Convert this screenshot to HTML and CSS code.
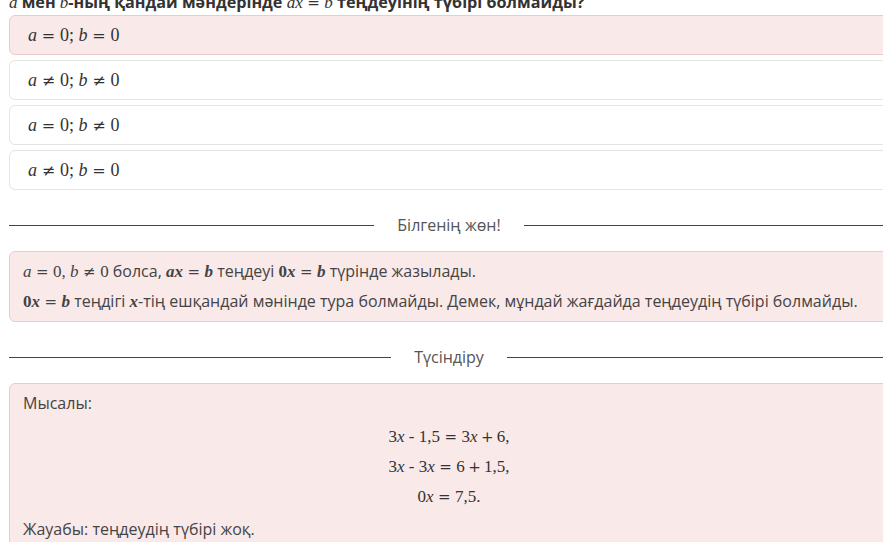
FILE: index.html
```html
<!DOCTYPE html>
<html lang="kk">
<head>
    <meta charset="UTF-8">
    <meta name="viewport" content="width=device-width, initial-scale=1.0">
    <title>Теңдеудің түбірі</title>
    <link rel="stylesheet" href="styles.css">
</head>
<body>
    <div class="page">
        <h2 class="question"><span class="m"><i>a</i></span> мен <span class="m"><i>b</i></span>-ның қандай мәндерінде <span class="m"><i>ax</i><span class="rel">=</span><i>b</i></span> теңдеуінің түбірі болмайды?</h2>

        <div class="options">
            <div class="option selected"><span class="m"><i>a</i><span class="rel">=</span>0; <i>b</i><span class="rel">=</span>0</span></div>
            <div class="option"><span class="m"><i>a</i><span class="rel">≠</span>0; <i>b</i><span class="rel">≠</span>0</span></div>
            <div class="option"><span class="m"><i>a</i><span class="rel">=</span>0; <i>b</i><span class="rel">≠</span>0</span></div>
            <div class="option"><span class="m"><i>a</i><span class="rel">≠</span>0; <i>b</i><span class="rel">=</span>0</span></div>
        </div>

        <div class="divider"><span>Білгенің жөн!</span></div>

        <div class="note">
            <p><span class="m"><i>a</i><span class="rel">=</span>0, <i>b</i><span class="rel">≠</span>0</span> болса, <span class="m bold"><i>ax</i><span class="rel">=</span><i>b</i></span> теңдеуі <span class="m bold">0<i>x</i><span class="rel">=</span><i>b</i></span> түрінде жазылады.</p>
            <p><span class="m bold">0<i>x</i><span class="rel">=</span><i>b</i></span> теңдігі <span class="m bold"><i>x</i></span>-тің ешқандай мәнінде тура болмайды. Демек, мұндай жағдайда теңдеудің түбірі болмайды.</p>
        </div>

        <div class="divider"><span>Түсіндіру</span></div>

        <div class="note example">
            <p>Мысалы:</p>
            <div class="equations">
                <div class="m">3<i>x</i> - 1,5<span class="rel">=</span>3<i>x</i><span class="bin">+</span>6,</div>
                <div class="m">3<i>x</i> - 3<i>x</i><span class="rel">=</span>6<span class="bin">+</span>1,5,</div>
                <div class="m">0<i>x</i><span class="rel">=</span>7,5.</div>
            </div>
            <p>Жауабы: теңдеудің түбірі жоқ.</p>
        </div>
    </div>
</body>
</html>
```

FILE: styles.css
```css
body {
    margin: 0;
    font-family: 'Open Sans', sans-serif;
    color: #444;
    background: #fff;
    overflow: hidden;
}
.page {
    width: 880px;
    margin: -8px 0 0 9px;
}
.m {
    font-family: 'Liberation Serif', serif;
    font-size: 17px;
    white-space: nowrap;
}
.m i {
    font-style: italic;
}
.m .rel {
    font-family: 'DejaVu Serif', serif;
    font-weight: 400;
    font-size: 15px;
    padding: 0 0.3em;
}
.m .bin {
    font-family: 'DejaVu Serif', serif;
    font-size: 15px;
    padding: 0 0.22em;
}
.m.bold {
    font-weight: 700;
}
.question {
    margin: 0 0 2px 0;
    font-size: 16.2px;
    line-height: 20px;
    font-weight: 700;
    color: #333;
}
.question .m {
    font-weight: 400;
}
.options {
    display: flex;
    flex-direction: column;
    gap: 5px;
}
.option {
    height: 38px;
    display: flex;
    align-items: center;
    padding: 0 18px;
    border: 1px solid #e4e4e4;
    border-radius: 6px;
    color: #333;
}
.option .m {
    font-size: 18px;
}
.option .m .rel {
    font-size: 16px;
}
.option.selected {
    background-color: #f9e9e9;
    border-color: #efcaca;
}
.divider {
    display: flex;
    align-items: center;
    gap: 23px;
    margin: 24px 0 15px;
    font-size: 16px;
    line-height: 22px;
    color: #555;
}
.divider::before,
.divider::after {
    content: "";
    flex: 1;
    height: 1px;
    background-color: #444;
}
.note {
    background-color: #f9e9e9;
    border: 1px solid #efcaca;
    border-radius: 6px;
    padding: 5px 13px 4px;
    font-size: 16px;
    line-height: 29px;
}
.note p {
    margin: 0;
}
.example {
    padding-top: 5px;
}
.equations {
    text-align: center;
    line-height: 30px;
    margin: 4px 0 3px;
    color: #333;
}
```
